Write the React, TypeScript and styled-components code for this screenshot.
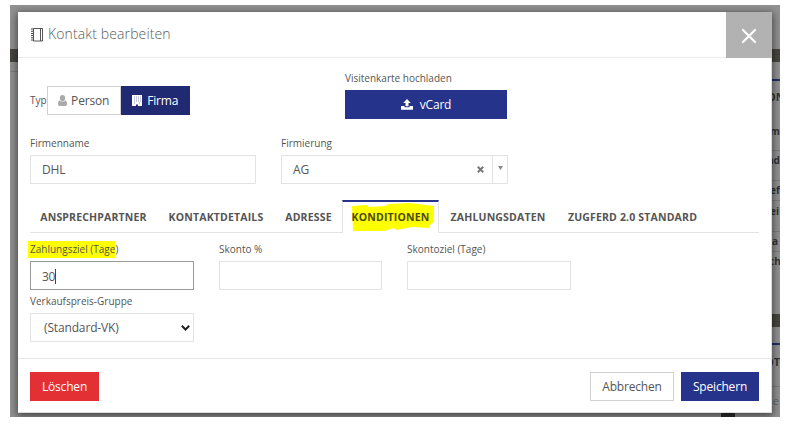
import React from "react";
import styled, { createGlobalStyle } from "styled-components";

const GlobalStyle = createGlobalStyle`
  * { box-sizing: border-box; }
  body { margin: 0; background: #fff; font-family: "Open Sans", sans-serif; color: #555; }
  button, input { font-family: inherit; margin: 0; border-radius: 0; }
`;

const Page = styled.div`
  width: 789px;
  height: 431px;
  padding: 5px 9px 14px 10px;
  overflow: hidden;
`;

const Stage = styled.div`
  position: relative;
  display: flex;
  justify-content: space-between;
  width: 770px;
  height: 412px;
  overflow: hidden;
  background: #929292;
`;

const BackdropColumn = styled.div<{ $width: number }>`
  display: flex;
  flex-direction: column;
  width: ${(p) => p.$width}px;
  height: 412px;
  overflow: hidden;
  padding-top: 44px;
`;

const DarkBar = styled.div`
  flex: none;
  height: 13px;
  background: #474641;
`;

const BackRow = styled.div<{ $height: number; $indent?: number; $top?: number; $line?: boolean; $size?: number; $light?: boolean }>`
  flex: none;
  height: ${(p) => p.$height}px;
  padding: ${(p) => p.$top ?? 0}px 0 0 ${(p) => p.$indent ?? 0}px;
  border-bottom: ${(p) => (p.$line ? "1px solid #7d7d7d" : "0")};
  font-size: ${(p) => p.$size ?? 10}px;
  line-height: 19px;
  font-weight: ${(p) => (p.$light ? 400 : 700)};
  color: ${(p) => (p.$light ? "#666" : "#333")};
  white-space: nowrap;
`;

const BackAccent = styled.div`
  flex: none;
  height: 2px;
  background: #252e70;
`;

const BackBlock = styled.div`
  align-self: flex-end;
  width: 14px;
  height: 5px;
  margin-left: auto;
  margin-right: 27px;
  background: #2d2b2b;
`;

const Dialog = styled.section`
  position: absolute;
  left: 8px;
  top: 7px;
  width: 754px;
  height: 401px;
  display: flex;
  flex-direction: column;
  background: #fff;
  border-right: 1px solid #ddd;
  border-bottom: 1px solid #ddd;
  box-shadow: 0 2px 8px 1px rgba(0, 0, 0, 0.55);
`;

const Header = styled.header`
  display: flex;
  align-items: center;
  height: 46px;
  flex: none;
  padding-left: 13px;
  border-bottom: 1px solid #ebebeb;
`;

const Title = styled.h1`
  flex: 1;
  margin: -1px 0 0 4px;
  font-size: 14px;
  line-height: 20px;
  font-weight: 300;
  letter-spacing: 0.12px;
  color: #5c5c5c;
`;

const CloseButton = styled.button`
  display: flex;
  align-items: center;
  justify-content: center;
  width: 46px;
  height: 46px;
  margin-right: -1px;
  padding: 2px 0 0;
  border: 0;
  background: #b2b2b2;
`;

const Body = styled.main`
  flex: none;
  height: 301px;
  padding: 0 12px;
  border-bottom: 1px solid #e6e6e6;
`;

const TopRow = styled.div`
  display: flex;
  height: 72px;
`;

const TypeGroup = styled.div`
  display: flex;
  align-items: center;
  width: 315px;
  height: 29px;
  margin-top: 28px;
`;

const UploadGroup = styled.div`
  display: flex;
  flex-direction: column;
  width: 162px;
  padding-top: 12px;
`;

const Label = styled.label<{ $height?: number }>`
  display: block;
  height: ${(p) => p.$height ?? 20}px;
  line-height: 17px;
  font-size: 10px;
  color: #555;
  white-space: nowrap;
`;

const Button = styled.button<{ $kind: "primary" | "active" | "plain" | "danger"; $width: number; $gap?: number }>`
  display: flex;
  align-items: center;
  justify-content: center;
  gap: ${(p) => p.$gap ?? 4}px;
  flex: none;
  width: ${(p) => p.$width}px;
  height: 29px;
  padding: 0;
  font-size: 12px;
  letter-spacing: -0.18px;
  border: 1px solid ${(p) => ({ primary: "#26338a", active: "#1f2a73", plain: "#d2d2d2", danger: "#e33035" })[p.$kind]};
  background: ${(p) => ({ primary: "#26338a", active: "#1f2a73", plain: "#fff", danger: "#e33035" })[p.$kind]};
  color: ${(p) => (p.$kind === "plain" ? "#555" : "#fff")};
`;

const CompanyRow = styled.div`
  display: flex;
  gap: 25px;
  height: 70px;
  padding-top: 5px;
`;

const Field = styled.div<{ $width: number }>`
  width: ${(p) => p.$width}px;
  flex: none;
`;

const Input = styled.input`
  display: block;
  width: 100%;
  height: 29px;
  padding: 0 11px 0 11px;
  border: 1px solid #e3e3e3;
  outline: 0;
  font-size: 12px;
  letter-spacing: -0.15px;
  color: #555;
  background: #fff;
`;

const ActiveInput = styled.div`
  display: flex;
  align-items: center;
  height: 29px;
  padding: 1px 0 0 11px;
  border: 1px solid #999;
  font-size: 12px;
  letter-spacing: -0.3px;
`;

const Caret = styled.span`
  width: 1px;
  height: 15px;
  background: #444;
`;

const SelectBox = styled.div<{ $indent: number; $right: number }>`
  display: flex;
  align-items: center;
  justify-content: space-between;
  height: 29px;
  padding: 0 ${(p) => p.$right}px 0 ${(p) => p.$indent}px;
  border: 1px solid #e3e3e3;
  font-size: 12px;
  letter-spacing: -0.15px;
`;

const SelectTools = styled.div`
  display: flex;
  align-items: center;
  height: 100%;
`;

const ArrowCell = styled.div`
  display: flex;
  align-items: center;
  justify-content: center;
  width: 15px;
  height: 100%;
  margin-left: 8px;
  padding-bottom: 3px;
  border-left: 1px solid #e3e3e3;
`;

const Tabs = styled.nav`
  display: flex;
  height: 33px;
  border-bottom: 1px solid #e3e3e3;
`;

const Tab = styled.div<{ $width: number; $active?: boolean }>`
  display: flex;
  align-items: center;
  justify-content: center;
  flex: none;
  width: ${(p) => p.$width}px;
  height: 33px;
  padding-bottom: 2px;
  font-size: 10.5px;
  font-weight: 700;
  letter-spacing: 0.17px;
  color: #555;
  white-space: nowrap;
  background: ${(p) => (p.$active ? "#fff" : "transparent")};
  border: solid ${(p) => (p.$active ? "#e3e3e3" : "transparent")};
  border-width: 2px 1px 0;
  border-top-color: ${(p) => (p.$active ? "#26338a" : "transparent")};
`;

const MarkedTab = styled.span`
  position: relative;
  color: #4b4a10;
`;

const MarkerStroke = styled.svg`
  position: absolute;
  left: 0;
  top: -7px;
  z-index: 0;
`;

const AboveMarker = styled.span`
  position: relative;
`;

const TermsRow = styled.div`
  display: flex;
  gap: 25px;
  height: 52px;
  padding-top: 8px;
`;

const Marked = styled.span`
  display: inline-block;
  height: 17px;
  margin-left: -2px;
  padding-left: 2px;
  background: #ff0;
`;

const PriceRow = styled.div`
  padding-top: 8px;
`;

const Footer = styled.footer`
  display: flex;
  gap: 7px;
  height: 53px;
  padding: 13px 12px 0;
`;

const Spacer = styled.div`
  flex: 1;
`;

const NotebookIcon = () => (
  <svg width="13" height="16" viewBox="0 0 13 16" fill="none" stroke="#444">
    <path d="M2.500 1.500h9v12.500h-9ZM9.500 1.500v12.500" strokeWidth=".9" />
    <path d="M1 1.500v13" strokeWidth="2" strokeDasharray="1 1.200" />
  </svg>
);

const PersonIcon = () => (
  <svg width="9" height="11" viewBox="0 0 9 11" fill="#aaa">
    <path d="M4.500 0C6.300 0 7.200 1.300 7.200 2.900S6.200 6.200 4.500 6.200 1.800 4.500 1.800 2.900 2.700 0 4.500 0ZM1.800 5.400c1.600 1.600 3.800 1.600 5.400 0C8.600 5.600 9 7 9 9c0 1.300-.6 2-1.600 2H1.600C.6 11 0 10.300 0 9c0-2 .4-3.400 1.800-3.600Z" />
  </svg>
);

const BuildingIcon = () => (
  <svg width="10" height="11" viewBox="0 0 10 11">
    <path d="M0 0h10v11H6V9.500H4V11H0Z" fill="#fff" />
    <path d="M2 2h1M4 2h1M6 2h1M8 2h.8M2 4h1M4 4h1M6 4h1M8 4h.8M2 6h1M4 6h1M6 6h1M8 6h.8M2 8h1M7 8h1" stroke="#8f95bf" />
  </svg>
);

const UploadIcon = () => (
  <svg width="12" height="11" viewBox="0 0 12 11" fill="#fff">
    <path d="M6 0 9.800 4H7.500v3.300h-3V4H2.200ZM0 7h3.500v1.300h5V7H12v3.700H0Z" />
  </svg>
);

const backRows = [
  { text: "ON", height: 31, indent: 5, top: 6, size: 11, line: false },
  { text: "m", height: 39, indent: 8, top: 10, size: 10, line: true },
  { text: "nd", height: 30, indent: 5, top: 0, size: 10, line: true },
  { text: "ef", height: 20, indent: 8, top: 0, size: 10, line: true },
  { text: "ei", height: 31, indent: 8, top: 1, size: 10, line: true },
  { text: "la", height: 20, indent: 7, top: 0, size: 10, line: true },
  { text: "ch", height: 20, indent: 7, top: 0, size: 10, line: false },
];

export default function App() {
  return (
    <Page>
      <GlobalStyle />
      <Stage>
        <BackdropColumn $width={8}>
          <DarkBar />
          <BackRow $height={10} $line />
        </BackdropColumn>
        <BackBlock />
        <BackdropColumn $width={18}>
          <DarkBar />
          <BackRow $height={17} />
          <BackAccent />
          {backRows.map((row) => (
            <BackRow key={row.text} $height={row.height} $indent={row.indent} $top={row.top} $size={row.size} $line={row.line}>
              {row.text}
            </BackRow>
          ))}
          <BackRow $height={42} />
          <DarkBar />
          <BackRow $height={16} />
          <BackAccent />
          <BackRow $height={42} $indent={3} $top={7} $size={11} $line>OT</BackRow>
          <BackRow $height={20} $indent={8} $top={4} $size={11} $light>ie</BackRow>
        </BackdropColumn>
        <Dialog>
          <Header>
            <NotebookIcon />
            <Title>Kontakt bearbeiten</Title>
            <CloseButton aria-label="Schließen">
              <svg width="16" height="16" viewBox="0 0 16 16" stroke="#fff" strokeWidth="2.200" strokeLinecap="round">
                <path d="m2 2 12 12M14 2 2 14" />
              </svg>
            </CloseButton>
          </Header>
          <Body>
            <TopRow>
              <TypeGroup>
                <Label $height={17}>Typ</Label>
                <Button $kind="plain" $width={74}><PersonIcon />Person</Button>
                <Button $kind="active" $width={69} $gap={5}><BuildingIcon />Firma</Button>
              </TypeGroup>
              <UploadGroup>
                <Label>Visitenkarte hochladen</Label>
                <Button $kind="primary" $width={162} $gap={7}><UploadIcon />vCard</Button>
              </UploadGroup>
            </TopRow>
            <CompanyRow>
              <Field $width={226}>
                <Label>Firmenname</Label>
                <Input defaultValue="DHL" />
              </Field>
              <Field $width={227}>
                <Label>Firmierung</Label>
                <SelectBox $indent={11} $right={0}>
                  AG
                  <SelectTools>
                    <svg width="7" height="7" viewBox="0 0 7 7" stroke="#777" strokeWidth="2"><path d="m.8.8 5.400 5.400M6.200.8.8 6.200" /></svg>
                    <ArrowCell>
                      <svg width="5" height="4" viewBox="0 0 5 4" fill="#888"><path d="M0 0h5L2.500 4Z" /></svg>
                    </ArrowCell>
                  </SelectTools>
                </SelectBox>
              </Field>
            </CompanyRow>
            <Tabs>
              <Tab $width={127}>ANSPRECHPARTNER</Tab>
              <Tab $width={118}>KONTAKTDETAILS</Tab>
              <Tab $width={67}>ADRESSE</Tab>
              <Tab $width={97} $active>
                <MarkedTab>
                  <MarkerStroke width="84" height="28" viewBox="0 0 84 28">
                    <path d="M0 3 15 2 17 4 34 3 36 1 58 0 82 3V19L78 22V25L60 24 44 27 42 25 32 28H1Z" fill="#ff0" />
                  </MarkerStroke>
                  <AboveMarker>KONDITIONEN</AboveMarker>
                </MarkedTab>
              </Tab>
              <Tab $width={118}>ZAHLUNGSDATEN</Tab>
              <Tab $width={151}>ZUGFERD 2.0 STANDARD</Tab>
            </Tabs>
            <TermsRow>
              <Field $width={164}>
                <Label><Marked>Zahlungsziel (Tage</Marked>)</Label>
                <ActiveInput>30<Caret /></ActiveInput>
              </Field>
              <Field $width={163}>
                <Label>Skonto %</Label>
                <Input />
              </Field>
              <Field $width={164}>
                <Label>Skontoziel (Tage)</Label>
                <Input />
              </Field>
            </TermsRow>
            <PriceRow>
              <Field $width={164}>
                <Label>Verkaufspreis-Gruppe</Label>
                <SelectBox $indent={13} $right={3}>
                  (Standard-VK)
                  <svg width="9" height="6" viewBox="0 0 9 6" fill="none" stroke="#222" strokeWidth="2"><path d="m.8.8 3.700 3.700L8.200.8" /></svg>
                </SelectBox>
              </Field>
            </PriceRow>
          </Body>
          <Footer>
            <Button $kind="danger" $width={69}>Löschen</Button>
            <Spacer />
            <Button $kind="plain" $width={84}>Abbrechen</Button>
            <Button $kind="primary" $width={78}>Speichern</Button>
          </Footer>
        </Dialog>
      </Stage>
    </Page>
  );
}
